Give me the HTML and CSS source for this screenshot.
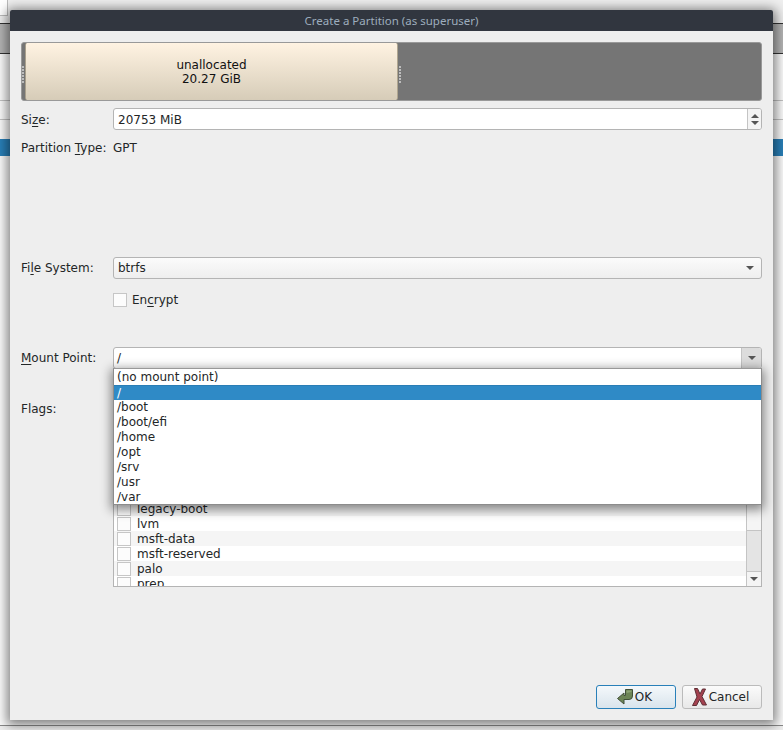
FILE: index.html
```html
<!DOCTYPE html>
<html lang="en">
<head>
    <meta charset="UTF-8">
    <title>Create a Partition (as superuser)</title>
    <link rel="stylesheet" href="styles.css">
</head>
<body>

    <!-- Main window behind the dialog -->
    <div class="backdrop">
        <div class="bd-top"><span class="bd-button"></span></div>
        <div class="bd-toolbar"></div>
        <div class="bd-row"></div>
        <div class="bd-row short"></div>
        <div class="bd-selected"></div>
        <div class="bd-fill"></div>
        <div class="bd-status"></div>
    </div>

    <div class="dialog">
        <div class="titlebar">Create a Partition (as superuser)</div>

        <div class="content">
            <div class="part-bar">
                <div class="part-free">
                    <span>unallocated</span>
                    <span>20.27 GiB</span>
                    <i class="grip grip-left"></i>
                    <i class="grip grip-right"></i>
                </div>
            </div>

            <div class="form">
                <label class="row-size">Si<u>z</u>e:</label>
                <div class="spinbox">
                    <span class="spin-text">20753 MiB</span>
                    <span class="spin-buttons">
                        <i class="arrow-up"></i>
                        <i class="arrow-down"></i>
                    </span>
                </div>

                <label class="row-type">Partition <u>T</u>ype:</label>
                <div class="row-type">GPT</div>

                <label class="row-fs">Fi<u>l</u>e System:</label>
                <div class="combo row-fs">
                    <span>btrfs</span>
                    <i class="arrow-down"></i>
                </div>

                <div class="encrypt">
                    <span class="check"></span>
                    <span class="encrypt-text">En<u>c</u>rypt</span>
                </div>

                <label class="row-mount"><u>M</u>ount Point:</label>
                <div class="mount-wrap">
                    <div class="mount-edit">
                        <span class="mount-text">/</span>
                        <span class="mount-button"><i class="arrow-down"></i></span>
                    </div>
                    <ul class="mount-popup">
                        <li>(no mount point)</li>
                        <li class="current">/</li>
                        <li>/boot</li>
                        <li>/boot/efi</li>
                        <li>/home</li>
                        <li>/opt</li>
                        <li>/srv</li>
                        <li>/usr</li>
                        <li>/var</li>
                    </ul>
                </div>

                <label class="row-flags">Flags:</label>
                <div class="flags">
                    <div class="flag-rows">
                        <div class="flag"><span class="check"></span>boot</div>
                        <div class="flag"><span class="check"></span>atvrecv</div>
                        <div class="flag"><span class="check"></span>bios-grub</div>
                        <div class="flag"><span class="check"></span>diag</div>
                        <div class="flag"><span class="check"></span>esp</div>
                        <div class="flag"><span class="check"></span>hidden</div>
                        <div class="flag"><span class="check"></span>hp-service</div>
                        <div class="flag"><span class="check"></span>legacy-boot</div>
                        <div class="flag"><span class="check"></span>lvm</div>
                        <div class="flag"><span class="check"></span>msft-data</div>
                        <div class="flag"><span class="check"></span>msft-reserved</div>
                        <div class="flag"><span class="check"></span>palo</div>
                        <div class="flag"><span class="check"></span>prep</div>
                    </div>
                    <div class="scrollbar">
                        <div class="sb-track"></div>
                        <div class="sb-handle"></div>
                        <div class="sb-button"><i class="arrow-down"></i></div>
                    </div>
                </div>
            </div>

            <div class="buttons">
                <button class="btn btn-default">
                    <svg width="16" height="16" viewBox="0 0 16 16">
                        <path d="M8.500.500H15.500V7Q15.500 10.500 12 10.500H7V15L.500 9.500 7 4V6.500H8.500Z" fill="#6c8456" stroke="#414f38" stroke-width="1" stroke-linejoin="round"/>
                        <path d="M9.500 1.500H14.500V3L9.500 4Z" fill="#8ba274"/>
                    </svg>
                    OK
                </button>
                <button class="btn">
                    <svg width="15" height="18" viewBox="0 0 15 18">
                        <path d="M2.500.500H5.500L8 6 10.500 1H13.500L10 8.500 14.500 17H10.500L7.500 11.500 4.500 17.500H.500L5 9Z" fill="#a4414f" stroke="#5f2f35" stroke-width="1" stroke-linejoin="round"/>
                    </svg>
                    Cancel
                </button>
            </div>
        </div>
    </div>

</body>
</html>
```

FILE: styles.css
```css
* {
    margin: 0;
    padding: 0;
    box-sizing: border-box;
}
body {
    width: 783px;
    height: 730px;
    overflow: hidden;
    background: #fcfcfc;
    color: #232627;
    font-family: "DejaVu Sans", sans-serif;
    font-size: 12px;
    position: relative;
}
u {
    text-underline-offset: 2px;
}
i {
    display: block;
}

/* main window behind the dialog */
.backdrop {
    display: flex;
    flex-direction: column;
    height: 730px;
}
.bd-top {
    height: 23px;
    background: #efefef;
}
.bd-button {
    display: block;
    width: 8px;
    height: 16px;
    background: #fff;
    border: 1px solid #bbb;
    border-left: none;
    border-top: none;
}
.bd-toolbar {
    height: 31px;
    background: #b5b5b5;
    border-top: 1px solid #333;
    border-bottom: 1px solid #333;
}
.bd-row {
    height: 47px;
    background: #fcfcfc;
    border-bottom: 1px solid #c4c4c4;
}
.bd-row.short {
    height: 19px;
}
.bd-selected {
    height: 17px;
    margin-top: 19px;
    background: #2980b9;
}
.bd-fill {
    flex: 1;
    background: #fcfcfc;
}
.bd-status {
    height: 5px;
    background: #efefef;
    border-top: 1px solid #8a8a8a;
}

/* dialog window */
.dialog {
    position: absolute;
    left: 10px;
    top: 10px;
    width: 763px;
    height: 710px;
    background: #eeeeee;
    border-radius: 2px 2px 0 0;
    box-shadow: 0 2px 12px 3px rgba(0, 0, 0, 0.5);
    display: flex;
    flex-direction: column;
}
.titlebar {
    height: 21px;
    line-height: 21px;
    background: #31363f;
    color: #9dadbd;
    font-family: "Noto Sans", sans-serif;
    font-size: 11.5px;
    text-align: center;
    border-radius: 2px 2px 0 0;
    flex: none;
}
.content {
    flex: 1;
    padding: 11px 11px 11px 11px;
    display: flex;
    flex-direction: column;
}

/* partition bar */
.part-bar {
    height: 59px;
    background: #757575;
    border: 1px solid #999;
    border-radius: 3px;
    padding-left: 3px;
    flex: none;
}
.part-free {
    position: relative;
    width: 373px;
    height: 100%;
    background: linear-gradient(#fff3e2, #d6ccb8);
    border-left: 1px solid #a89f8c;
    border-right: 1px solid #b0a690;
    border-radius: 2px;
    display: flex;
    flex-direction: column;
    align-items: center;
    justify-content: center;
    line-height: 14px;
    color: #111;
}
.grip {
    position: absolute;
    top: 23px;
    width: 2px;
    height: 17px;
    background: repeating-linear-gradient(#bdbdbd 0 2px, transparent 2px 3px);
}
.grip-left {
    left: -4px;
}
.grip-right {
    right: -4px;
}

/* form */
.form {
    display: grid;
    grid-template-columns: 92px 1fr;
    grid-template-rows: 23px 26px 100px 22px 68px 22px 225px;
    margin-top: 7px;
    flex: 1;
    align-items: center;
}
.spinbox, .combo, .mount-edit {
    height: 22px;
    border: 1px solid #b4b4b4;
    border-radius: 3px;
    display: flex;
    align-items: center;
}
.spinbox {
    background: #fff;
    padding-left: 4px;
    justify-content: space-between;
    align-self: start;
}
.spin-text {
    flex: 1;
    padding-top: 1px;
}
.spin-buttons {
    width: 14px;
    height: 20px;
    border-left: 1px solid #c4c4c4;
    background: #f4f4f4;
    border-radius: 0 2px 2px 0;
    display: flex;
    flex-direction: column;
    align-items: center;
    justify-content: center;
    gap: 3px;
}
.arrow-up, .arrow-down {
    width: 0;
    height: 0;
    border-left: 4px solid transparent;
    border-right: 4px solid transparent;
}
.arrow-up {
    border-bottom: 4px solid #555;
}
.arrow-down {
    border-top: 4px solid #555;
}
.row-size {
    align-self: start;
    line-height: 22px;
    margin-top: 1px;
}
.row-type {
    grid-row: 2;
    margin-top: 9px;
    line-height: 17px;
    align-self: start;
    white-space: nowrap;
}
.row-fs {
    grid-row: 4;
}
.combo {
    background: linear-gradient(#fbfbfb, #eeeeee);
    padding: 0 7px 0 4px;
    justify-content: space-between;
}
.encrypt {
    grid-column: 2;
    grid-row: 5;
    display: flex;
    align-items: center;
    gap: 5px;
    align-self: start;
    margin-top: 13px;
}
.encrypt-text {
    padding-top: 1px;
}
.check {
    display: block;
    width: 14px;
    height: 14px;
    background: #fcfcfc;
    border: 1px solid #c6c6c6;
    flex: none;
}
.row-mount {
    grid-row: 6;
}
.mount-wrap {
    grid-row: 6;
    grid-column: 2;
    position: relative;
    z-index: 2;
}
.mount-edit {
    background: #fff;
    padding-left: 3px;
    justify-content: space-between;
}
.mount-button {
    width: 20px;
    height: 20px;
    background: #dcdcdc;
    border-left: 1px solid #c4c4c4;
    border-radius: 0 2px 2px 0;
    display: flex;
    align-items: center;
    justify-content: center;
}
.mount-popup {
    position: absolute;
    left: 0;
    right: 0;
    top: 21px;
    height: 137px;
    padding-top: 1px;
    background: #fff;
    border: 1px solid #8c8c8c;
    border-top-color: #999;
    list-style: none;
    box-shadow: 0 3px 10px 2px rgba(0, 0, 0, 0.45);
}
.mount-popup li {
    height: 15px;
    line-height: 15px;
    padding-left: 3px;
    color: #232627;
}
.mount-popup .current {
    background: #2f8ac6;
    border-top: 1px solid #2a7db5;
    color: #fff;
}
.row-flags {
    grid-row: 7;
    align-self: start;
    margin-top: 33px;
}
.flags {
    grid-row: 7;
    grid-column: 2;
    align-self: start;
    margin-top: 27px;
    height: 191px;
    background: #fff;
    border: 1px solid #b4b4b4;
    border-top: none;
    display: flex;
    overflow: hidden;
    position: relative;
}
.flag-rows {
    flex: 1;
    overflow: hidden;
    background: #fff;
}
.flag {
    height: 15px;
    line-height: 17px;
    display: flex;
    align-items: flex-start;
    gap: 6px;
    padding-left: 3px;
}
.flag:nth-child(even) {
    background: #f5f5f5;
}
.flag:nth-child(odd) {
    background: #fff;
}
.flag:nth-child(8) {
    background: #f5f5f5;
}
.flag .check {
    margin-top: 1px;
}
.scrollbar {
    width: 15px;
    border-left: 1px solid #c4c4c4;
    display: flex;
    flex-direction: column;
}
.sb-track {
    flex: 1;
    background: #f5f5f5;
}
.sb-handle {
    height: 42px;
    background: #e4e4e4;
    border-top: 1px solid #c4c4c4;
    border-bottom: 1px solid #c4c4c4;
}
.sb-button {
    height: 14px;
    background: #f4f4f4;
    display: flex;
    align-items: center;
    justify-content: center;
}

/* dialog buttons */
.buttons {
    display: flex;
    justify-content: flex-end;
    gap: 6px;
    flex: none;
}
.btn {
    width: 80px;
    height: 24px;
    padding-right: 3px;
    font-family: inherit;
    font-size: 12px;
    color: #232627;
    background: linear-gradient(#fbfbfb, #e8e8e8);
    border: 1px solid #bbb;
    border-radius: 3px;
    display: flex;
    align-items: center;
    justify-content: center;
    gap: 2px;
}
.btn-default {
    background: linear-gradient(#f4f8fb, #d9e4ec);
    border-color: #2980b9;
}
```
